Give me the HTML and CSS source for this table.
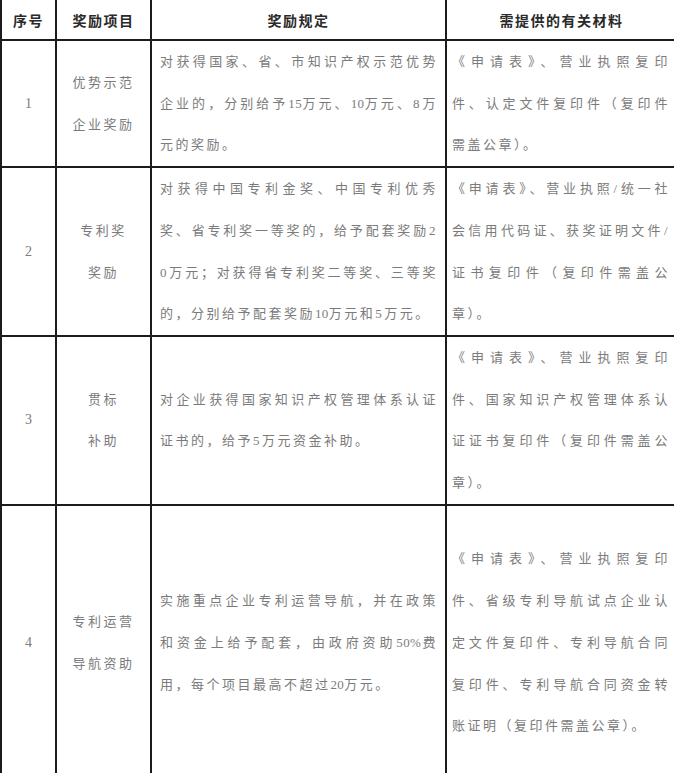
FILE: index.html
```html
<!DOCTYPE html>
<html lang="zh-CN">
<head>
<meta charset="utf-8">
<title>奖励项目</title>
<link rel="stylesheet" href="styles.css">
</head>
<body>
<table class="grid">
  <colgroup>
    <col class="c-no">
    <col class="c-item">
    <col class="c-rule">
    <col class="c-doc">
  </colgroup>
  <thead>
    <tr class="head">
      <th>序号</th>
      <th>奖励项目</th>
      <th>奖励规定</th>
      <th>需提供的有关材料</th>
    </tr>
  </thead>
  <tbody>
    <tr>
      <td class="no">1</td>
      <td class="item"><span class="ln">优势示范</span><span class="ln">企业奖励</span></td>
      <td class="rule">
        <span class="ln full">对获得国家、省、市知识产权示范优势</span>
        <span class="ln full">企业的，分别给予<span class="num">15</span>万元、<span class="num">10</span>万元、8万</span>
        <span class="ln">元的奖励。</span>
      </td>
      <td class="doc">
        <span class="ln full">《申请表》、营业执照复印</span>
        <span class="ln full">件、认定文件复印件（复印件</span>
        <span class="ln">需盖公章）。</span>
      </td>
    </tr>
    <tr>
      <td class="no">2</td>
      <td class="item"><span class="ln">专利奖</span><span class="ln">奖励</span></td>
      <td class="rule">
        <span class="ln full">对获得中国专利金奖、中国专利优秀</span>
        <span class="ln full">奖、省专利奖一等奖的，给予配套奖励2</span>
        <span class="ln full">0万元；对获得省专利奖二等奖、三等奖</span>
        <span class="ln">的，分别给予配套奖励<span class="num">10</span>万元和5万元。</span>
      </td>
      <td class="doc">
        <span class="ln full">《申请表》、营业执照/统一社</span>
        <span class="ln full">会信用代码证、获奖证明文件/</span>
        <span class="ln full">证书复印件（复印件需盖公</span>
        <span class="ln">章）。</span>
      </td>
    </tr>
    <tr>
      <td class="no">3</td>
      <td class="item"><span class="ln">贯标</span><span class="ln">补助</span></td>
      <td class="rule">
        <span class="ln full">对企业获得国家知识产权管理体系认证</span>
        <span class="ln">证书的，给予5万元资金补助。</span>
      </td>
      <td class="doc">
        <span class="ln full">《申请表》、营业执照复印</span>
        <span class="ln full">件、国家知识产权管理体系认</span>
        <span class="ln full">证证书复印件（复印件需盖公</span>
        <span class="ln">章）。</span>
      </td>
    </tr>
    <tr class="tall">
      <td class="no">4</td>
      <td class="item"><span class="ln">专利运营</span><span class="ln">导航资助</span></td>
      <td class="rule">
        <span class="ln full">实施重点企业专利运营导航，并在政策</span>
        <span class="ln full">和资金上给予配套，由政府资助<span class="num">50%</span>费</span>
        <span class="ln">用，每个项目最高不超过<span class="num">20</span>万元。</span>
      </td>
      <td class="doc">
        <span class="ln full">《申请表》、营业执照复印</span>
        <span class="ln full">件、省级专利导航试点企业认</span>
        <span class="ln full">定文件复印件、专利导航合同</span>
        <span class="ln full">复印件、专利导航合同资金转</span>
        <span class="ln">账证明（复印件需盖公章）。</span>
      </td>
    </tr>
  </tbody>
</table>
</body>
</html>
```

FILE: styles.css
```css
html, body {
  margin: 0;
  padding: 0;
  background: #ffffff;
}

.grid {
  border-collapse: collapse;
  table-layout: fixed;
  width: 676px;
  font-family: "Liberation Serif", "Noto Sans CJK SC", serif;
  color: #7b7b7b;
  font-size: 13px;
}

.c-no { width: 55px; }
.c-item { width: 95px; }
.c-rule { width: 295px; }
.c-doc { width: 231px; }

.grid th,
.grid td {
  border: 2px solid #1c1c1c;
  padding: 0;
  vertical-align: middle;
}

.grid th {
  border-top: 0;
  height: 39px;
  font-family: "Noto Sans CJK SC", serif;
  font-weight: 700;
  font-size: 14px;
  letter-spacing: 1.5px;
  color: #2a2a2a;
  text-align: center;
}

.ln {
  display: block;
  line-height: 41.7px;
  white-space: nowrap;
  letter-spacing: 2.5px;
}

.num {
  letter-spacing: 0.3px;
}

.full {
  text-align: justify;
  text-align-last: justify;
}

.no {
  text-align: center;
  font-size: 14px;
}

.item {
  text-align: center;
}

.rule {
  padding: 0 7px 0 8px !important;
}

.doc {
  padding: 0 6px 0 5px !important;
}

.tall td {
  height: 274px;
}
```
